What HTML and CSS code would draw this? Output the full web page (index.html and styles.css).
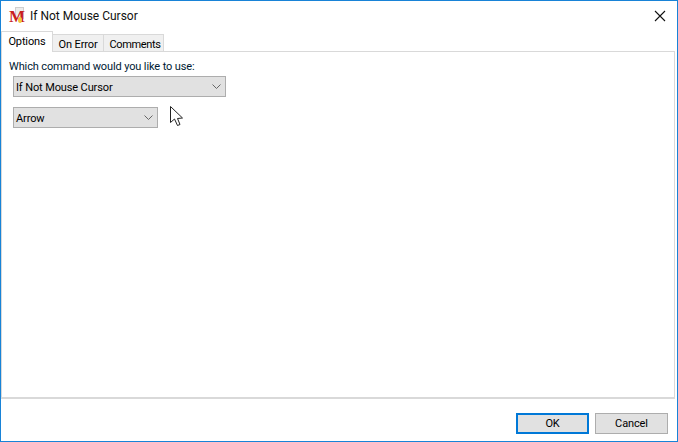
FILE: index.html
```html
<!DOCTYPE html>
<html lang="en">
<head>
  <meta charset="UTF-8">
  <title>If Not Mouse Cursor</title>
  <link rel="stylesheet" href="styles.css">
</head>
<body>
  <div class="window">
    <div class="titlebar">
      <div class="app-icon">
        <span class="app-page"></span>
        <span class="app-letter">M</span>
        <span class="app-flame"></span>
      </div>
      <span class="title">If Not Mouse Cursor</span>
      <svg class="close" width="12" height="12" viewBox="0 0 12 12">
        <path d="M1 1 L11 11 M11 1 L1 11" stroke="#111" stroke-width="1.1" fill="none"/>
      </svg>
    </div>
    <div class="tabs">
      <div class="tab active">Options</div>
      <div class="tab tab-error">On Error</div>
      <div class="tab tab-comments">Comments</div>
    </div>
    <div class="panel">
      <div class="label">Which command would you like to use:</div>
      <div class="combo combo-wide">
        <span>If Not Mouse Cursor</span>
        <svg width="9" height="5" viewBox="0 0 9 5"><path d="M0.5 0.5 L4.5 4.5 L8.5 0.5" stroke="#666" fill="none"/></svg>
      </div>
      <div class="combo-row">
        <div class="combo combo-small">
          <span>Arrow</span>
          <svg width="9" height="5" viewBox="0 0 9 5"><path d="M0.5 0.5 L4.5 4.5 L8.5 0.5" stroke="#666" fill="none"/></svg>
        </div>
        <svg class="cursor" width="14" height="21" viewBox="0 0 14 21">
          <path d="M0.5 0.5 L0.5 16.5 L4.5 13 L7.5 19.5 L10 18.5 L7.5 12.5 L12.5 12 Z" fill="#fff" stroke="#222" stroke-width="1"/>
        </svg>
      </div>
    </div>
    <div class="footer">
      <button class="btn btn-default">OK</button>
      <button class="btn">Cancel</button>
    </div>
  </div>
</body>
</html>
```

FILE: styles.css
```css
html, body {
  margin: 0;
  height: 100%;
}

body {
  font-family: Roboto, 'Open Sans', sans-serif;
  font-size: 11px;
  letter-spacing: -0.12px;
  color: #000;
  background: #fff;
}

.window {
  box-sizing: border-box;
  height: 442px;
  display: flex;
  flex-direction: column;
  border: 1px solid #1883d7;
}

.titlebar {
  height: 30px;
  display: flex;
  align-items: center;
  padding: 0 11px 0 8px;
  flex: none;
}

.app-icon {
  position: relative;
  width: 16px;
  height: 16px;
  margin-right: 5px;
}

.app-page {
  position: absolute;
  left: 6px;
  top: -1px;
  width: 9px;
  height: 12px;
  background: #ececec;
  border: 1px solid #cfcfcf;
  box-sizing: border-box;
}

.app-letter {
  position: absolute;
  left: 0;
  top: -1px;
  font-family: 'Liberation Serif', serif;
  font-weight: bold;
  font-size: 17px;
  line-height: 20px;
  color: #c8201c;
}

.app-flame {
  position: absolute;
  left: 9px;
  top: 9px;
  width: 4px;
  height: 6px;
  background: #f4c53a;
  border-radius: 50%;
}

.title {
  flex: 1;
  font-size: 12px;
  letter-spacing: 0;
  color: #111;
}

.tabs {
  flex: none;
  display: flex;
  align-items: flex-end;
  height: 21px;
  position: relative;
  z-index: 1;
  margin-bottom: -1px;
}

.tab {
  box-sizing: border-box;
  height: 18px;
  line-height: 19px;
  text-align: center;
  background: #f0f0f0;
  border: 1px solid #d9d9d9;
  border-left: none;
}

.tab-error {
  width: 51px;
}

.tab-comments {
  width: 60px;
  padding-left: 3px;
  letter-spacing: -0.35px;
}

.tab.active {
  width: 52px;
  height: 21px;
  line-height: 20px;
  background: #fff;
  border-left: 1px solid #d9d9d9;
  border-bottom: none;
}

.panel {
  flex: 1;
  box-sizing: border-box;
  margin-right: 2px;
  padding: 7px 7px 0;
  border-top: 1px solid #d9d9d9;
  border-right: 1px solid #d9d9d9;
  border-left: 1px solid #d9d9d9;
  border-bottom: 2px solid #d9d9d9;
}

.label {
  line-height: 16px;
  margin-bottom: 1px;
  color: #001a33;
}

.combo {
  box-sizing: border-box;
  height: 21px;
  display: flex;
  align-items: center;
  justify-content: space-between;
  padding: 0 4px 0 2px;
  background: #e1e1e1;
  border: 1px solid #adadad;
}

.combo span {
  padding-top: 2px;
}

.combo-wide {
  width: 213px;
  margin-left: 4px;
}

.combo-row {
  display: flex;
  align-items: flex-start;
  margin: 10px 0 0 4px;
}

.combo-small {
  width: 145px;
}

.cursor {
  margin-left: 12px;
  margin-top: -1px;
}

.footer {
  flex: none;
  height: 42px;
  display: flex;
  justify-content: flex-end;
  gap: 6px;
  padding: 14px 9px 0 0;
  box-sizing: border-box;
}

.btn {
  width: 73px;
  height: 21px;
  padding: 0;
  font: inherit;
  letter-spacing: inherit;
  background: #e1e1e1;
  border: 1px solid #adadad;
  color: #000;
}

.btn-default {
  border: 2px solid #0078d7;
}
```
